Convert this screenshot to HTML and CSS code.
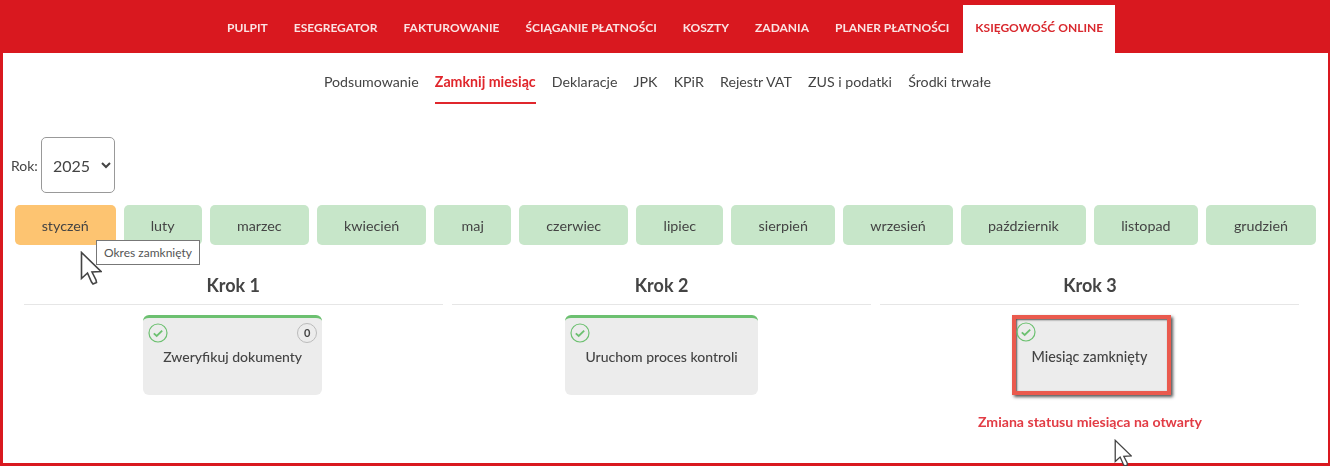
FILE: index.html
```html
<!DOCTYPE html>
<html lang="pl">
<head>
    <meta charset="UTF-8">
    <meta name="viewport" content="width=device-width, initial-scale=1.0">
    <title>Zamknij miesiąc</title>
    <link rel="stylesheet" href="styles.css">
</head>
<body>
<div class="frame">

    <!-- główne menu -->
    <nav class="main-nav">
        <a href="#">PULPIT</a>
        <a href="#">ESEGREGATOR</a>
        <a href="#">FAKTUROWANIE</a>
        <a href="#">ŚCIĄGANIE PŁATNOŚCI</a>
        <a href="#">KOSZTY</a>
        <a href="#">ZADANIA</a>
        <a href="#">PLANER PŁATNOŚCI</a>
        <a href="#" class="active">KSIĘGOWOŚĆ ONLINE</a>
    </nav>

    <!-- podmenu -->
    <nav class="sub-nav">
        <a href="#">Podsumowanie</a>
        <a href="#" class="active">Zamknij miesiąc</a>
        <a href="#">Deklaracje</a>
        <a href="#">JPK</a>
        <a href="#">KPiR</a>
        <a href="#">Rejestr VAT</a>
        <a href="#">ZUS i podatki</a>
        <a href="#">Środki trwałe</a>
    </nav>

    <div class="year-row">
        <label for="year">Rok:</label>
        <select id="year">
            <option>2025</option>
        </select>
    </div>

    <div class="months">
        <button class="month closed">styczeń</button>
        <button class="month">luty</button>
        <button class="month">marzec</button>
        <button class="month">kwiecień</button>
        <button class="month">maj</button>
        <button class="month">czerwiec</button>
        <button class="month">lipiec</button>
        <button class="month">sierpień</button>
        <button class="month">wrzesień</button>
        <button class="month">październik</button>
        <button class="month">listopad</button>
        <button class="month">grudzień</button>
    </div>

    <div class="steps">
        <section class="step">
            <h3>Krok 1</h3>
            <div class="card card-docs">
                <div class="card-top">
                    <svg class="check" viewBox="0 0 20 20"><circle cx="10" cy="10" r="9"/><path d="M5.8 10.3l2.9 2.7 5.500-5.400"/></svg>
                    <span class="count">0</span>
                </div>
                <p>Zweryfikuj dokumenty</p>
            </div>
        </section>
        <section class="step">
            <h3>Krok 2</h3>
            <div class="card card-control">
                <div class="card-top">
                    <svg class="check" viewBox="0 0 20 20"><circle cx="10" cy="10" r="9"/><path d="M5.8 10.3l2.9 2.7 5.500-5.400"/></svg>
                </div>
                <p>Uruchom proces kontroli</p>
            </div>
        </section>
        <section class="step">
            <h3>Krok 3</h3>
            <div class="card card-closed">
                <div class="card-top">
                    <svg class="check" viewBox="0 0 20 20"><circle cx="10" cy="10" r="9"/><path d="M5.8 10.3l2.9 2.7 5.500-5.400"/></svg>
                </div>
                <p>Miesiąc zamknięty</p>
            </div>
            <div class="status-note">Zmiana statusu miesiąca na otwarty</div>
        </section>
    </div>

    <!-- dymek i kursory nad treścią -->
    <div class="tooltip">Okres zamknięty</div>
    <svg class="cursor cursor-month" viewBox="0 0 22 34"><path d="M1.500 1.500v26l6-5.500 4 9 1.500 2 3.500-1.500-.5-2.500-4-8 9-.5z"/></svg>
    <svg class="cursor cursor-note" viewBox="0 0 22 34"><path d="M1.500 1.500v26l6-5.500 4 9 1.500 2 3.500-1.500-.5-2.500-4-8 9-.5z"/></svg>

</div>
</body>
</html>
```

FILE: styles.css
```css
/* ogólne */
* {
    box-sizing: border-box;
}

body {
    height: 466px;
    margin: 0;
    overflow: hidden;
    font-family: 'Lato', sans-serif;
    color: #444;
    background: #fff;
}

.frame {
    position: relative;
    width: 1330px;
    height: 466px;
    border: solid #d9181f;
    border-width: 2px 2px 3px 3px;
    filter: blur(0.5px);
}

/* główne menu */
.main-nav {
    display: flex;
    height: 51px;
    padding: 3px 0 0 211px;
    background: #d9181f;
}

.main-nav a {
    display: flex;
    align-items: center;
    padding: 0 13px 3px;
    color: #fbe3e3;
    font-size: 12px;
    font-weight: 700;
    text-decoration: none;
}

.main-nav a.active {
    margin-left: 1px;
    padding: 0 12px 3px;
    background: #fff;
    color: #d9282e;
}

/* podmenu */
.sub-nav {
    display: flex;
    justify-content: center;
    gap: 16.2px;
    height: 51px;
    padding-right: 16px;
}

.sub-nav a {
    padding-top: 20px;
    color: #444;
    font-size: 14.2px;
    text-decoration: none;
}

.sub-nav a.active {
    border-bottom: 2px solid #e0262c;
    color: #e0262c;
    font-weight: 700;
}

/* wybór roku */
.year-row {
    display: flex;
    align-items: center;
    gap: 3px;
    margin: 33px 0 0 8px;
    font-size: 14px;
}

.year-row select {
    width: 74px;
    height: 56px;
    padding-left: 7px;
    border: 1px solid #999;
    border-radius: 5px;
    background: #fff;
    color: #444;
    font-family: inherit;
    font-size: 16px;
}

/* miesiące */
.months {
    display: flex;
    gap: 8px;
    width: 1301px;
    margin: 12px 0 0 12px;
}

.month {
    flex: 1 1 auto;
    height: 40px;
    padding: 0 26px;
    border: 0;
    border-radius: 5px;
    background: #c7e6c9;
    color: #444;
    font-family: inherit;
    font-size: 14.3px;
}

.month.closed {
    padding: 0 25.5px;
    background: #fdc471;
}

.month:last-child {
    padding: 0 27px;
}

/* kroki */
.steps {
    display: flex;
    margin: 26px 0 0 16px;
}

.step {
    display: flex;
    flex-direction: column;
    align-items: center;
    width: 428.4px;
}

.step h3 {
    width: 419px;
    height: 34px;
    margin: 0 0 10px;
    padding-top: 3px;
    border-bottom: 1px solid #e6e6e6;
    font-size: 18px;
    text-align: center;
}

.card {
    height: 80px;
    padding: 5px;
    border-top: 3px solid #6cc070;
    border-radius: 6px;
    background: #ececec;
}

.card p {
    margin: 5px 0 0;
    font-size: 14px;
    font-weight: 500;
    text-align: center;
}

.card-top {
    display: flex;
    justify-content: space-between;
    align-items: center;
    height: 20px;
}

.card-docs {
    width: 179px;
    margin-right: 1px;
}

.card-control {
    width: 193px;
}

.card-closed {
    width: 159px;
    margin-left: 4px;
    padding: 3px 5px 0 0;
    border: 4px solid #ea5a4e;
    border-radius: 0;
    box-shadow: 2px 2px 3px #555, inset 1px 1px 2px #555;
}

.card-closed p {
    margin-top: 6px;
    font-size: 14.3px;
}

.check {
    width: 20px;
    height: 20px;
    fill: none;
    stroke: #6cc070;
    stroke-width: 1.2;
}

.check path {
    stroke-width: 1.8;
}

.count {
    width: 20px;
    height: 20px;
    border: 1.5px solid #bbb;
    border-radius: 50%;
    font-size: 11px;
    font-weight: 700;
    line-height: 17px;
    text-align: center;
}

.status-note {
    margin: 18px 0 0;
    color: #e23c45;
    font-size: 14.1px;
    font-weight: 700;
}

/* dymek i kursory */
.tooltip {
    position: absolute;
    top: 238px;
    left: 93px;
    padding: 4px 7px;
    border: 1px solid #777;
    background: #fff;
    color: #555;
    font-size: 12px;
}

.cursor {
    position: absolute;
    width: 22px;
    height: 34px;
    fill: #fff;
    stroke: #444;
    stroke-width: 1.6;
}

.cursor-month {
    top: 249px;
    left: 77px;
}

.cursor-note {
    top: 437px;
    left: 1111px;
    width: 18px;
    height: 28px;
}
```
